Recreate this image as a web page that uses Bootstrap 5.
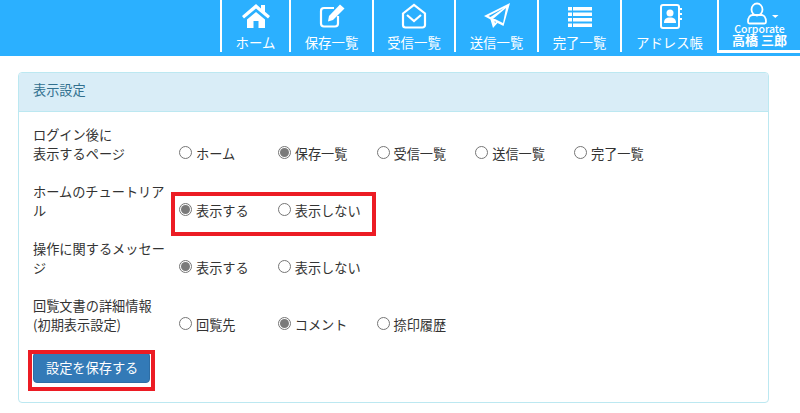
<!DOCTYPE html>
<html lang="ja"><head><meta charset="utf-8"><title>表示設定</title>
<link href="https://cdn.jsdelivr.net/npm/bootstrap@5.3.0/dist/css/bootstrap.min.css" rel="stylesheet">
<style>
html,body{height:413px;overflow:hidden;background:#fff}
body{font-family:"Noto Sans CJK JP","Liberation Sans",sans-serif;font-size:13.2px;color:#333;line-height:19px}
.topbar{height:56px;background:#2bb0ff}
.nav-cell{height:52px;border-left:2px solid #fff;color:#fff;font-size:13.4px;line-height:16px;text-align:center;white-space:nowrap;padding-top:3px}
.nav-cell svg{display:block;margin:0 auto 5px;height:26px;width:30px}
.c1{width:69px}.c2{width:83px}.c3{width:82px}.c4{width:83px}.c5{width:83px}.c6{width:97px}
.user-cell{width:83px;height:53px;border-left:2px solid #fff;border-bottom:3px solid #fff;color:#fff;text-align:center;font-weight:500;padding-top:2px}
.user-cell svg{height:24px;width:42px;display:block;margin:0 auto -2px}
.u-corp{font-size:10.5px;line-height:9px;white-space:nowrap}
.u-name{font-size:13px;line-height:12px;white-space:nowrap;font-weight:700;margin-top:1px}
.panel-box{margin:16px 31px 0 18px;height:331px;border:1px solid #bce8f1;border-radius:4px;position:relative}
.panel-head{height:39px;background:#d9edf7;border-bottom:1px solid #bce8f1;color:#31708f;padding:7px 14px;border-radius:3px 3px 0 0}
.panel-inner{padding:13px 14px 0}
.set-row{display:flex;align-items:flex-end;height:38px;margin-bottom:19px}
.set-row:nth-last-child(2){margin-bottom:18px}
.set-label{width:146px;flex:none}
.opt{width:98.75px;flex:none;display:flex;align-items:center;gap:4px;height:19px}
.opt-dot{width:13px;height:13px;border:1px solid #767676;border-radius:50%;background:#fff;flex:none;display:flex;align-items:center;justify-content:center;margin-top:-2px}
.opt-dot.on::after{content:"";width:9px;height:9px;border-radius:50%;background:#7a7a7a}
.save-btn{--bs-btn-bg:#337ab7;--bs-btn-border-color:#2e6da4;--bs-btn-hover-bg:#337ab7;--bs-btn-color:#fff;--bs-btn-hover-color:#fff;--bs-btn-font-size:13.2px;--bs-btn-padding-y:5px;--bs-btn-padding-x:12px;--bs-btn-border-radius:4px;--bs-btn-line-height:19px;width:117px;white-space:nowrap;box-shadow:0 0 0 1px #fff}
.mark-a,.mark-b{position:absolute;border:4px solid #ec1c24;pointer-events:none}
.mark-a{left:152px;top:119px;width:205px;height:44px}
.mark-b{left:9px;top:277px;width:127px;height:41px}
</style></head>
<body>
<div class="topbar d-flex justify-content-end">
  <div class="nav-cell c1">
    <svg viewBox="0 0 30 26"><path fill="#fff" d="M15 1 1 13l2 2.500L15 5.500l12 10 2-2.500-5-4.300V2h-4v3.400zM6 16.500V25h6.500v-7h5v7H24v-8.500L15 9z"/></svg>ホーム</div>
  <div class="nav-cell c2">
    <svg viewBox="0 0 30 26" fill="none" stroke="#fff" stroke-width="2.200"><path d="M21 13v7.500a3 3 0 0 1-3 3H7a3 3 0 0 1-3-3V8a3 3 0 0 1 3-3h10"/><path fill="#fff" stroke="none" d="M23 1.500 27.500 5.500 16 17l-5 1.500L12 13z"/></svg>保存一覧</div>
  <div class="nav-cell c3">
    <svg viewBox="0 0 30 26" fill="none" stroke="#fff" stroke-width="2.200"><path d="M4 10.500 15 2l11 8.500V22a2.500 2.500 0 0 1-2.500 2.500h-17A2.500 2.500 0 0 1 4 22z"/><path d="M8 12l7 6 7-6"/></svg>受信一覧</div>
  <div class="nav-cell c4">
    <svg viewBox="0 0 30 26"><path fill="#fff" fill-rule="evenodd" d="M28 0 2 13l6.500 3.500L11 25l4.500-5 6 3zM8.500 14 6.500 13 22 5zM11 16 24 5l-3 15-8-4zM12.500 18l1.500 1-1 1z"/></svg>送信一覧</div>
  <div class="nav-cell c5">
    <svg viewBox="0 0 30 26" fill="#fff"><path d="M3 4h24v3.500H3zM3 9.500h24V13H3zM3 15h24v3.500H3zM3 20.500h24V24H3z"/><path stroke="#2bb0ff" d="M7.500 3v22"/></svg>完了一覧</div>
  <div class="nav-cell c6">
    <svg viewBox="0 0 30 26" fill="none"><rect x="6" y="2" width="18" height="23" rx="2" stroke="#fff" stroke-width="2"/><circle cx="15" cy="10" r="3.500" fill="#fff"/><path fill="#fff" d="M9 20c0-4 2-5.500 6-5.500s6 1.500 6 5.500z"/><path stroke="#fff" stroke-width="2" d="M24 6h3M24 11h3M24 16h3"/></svg>アドレス帳</div>
  <div class="user-cell">
    <svg viewBox="0 0 42 24" fill="none"><ellipse cx="18" cy="7.500" rx="5.500" ry="6" stroke="#fff" stroke-width="1.800"/><path d="M9 20c0-5 2.500-7 4.500-7h9c2 0 4.500 2 4.500 7 0 1-.5 1.500-1.500 1.500h-15C9.500 21.500 9 21 9 20z" stroke="#fff" stroke-width="1.800"/><path fill="#fff" d="M33 13h6.500l-3.250 3z"/></svg>
    <div class="u-corp">Corporate</div><div class="u-name">高橋 三郎</div>
  </div>
</div>
<div class="panel-box">
  <div class="panel-head">表示設定</div>
  <div class="panel-inner">
    <div class="set-row"><div class="set-label">ログイン後に<br>表示するページ</div>
      <div class="opt"><span class="opt-dot"></span>ホーム</div><div class="opt"><span class="opt-dot on"></span>保存一覧</div><div class="opt"><span class="opt-dot"></span>受信一覧</div><div class="opt"><span class="opt-dot"></span>送信一覧</div><div class="opt"><span class="opt-dot"></span>完了一覧</div></div>
    <div class="set-row"><div class="set-label">ホームのチュートリア<br>ル</div>
      <div class="opt"><span class="opt-dot on"></span>表示する</div><div class="opt"><span class="opt-dot"></span>表示しない</div></div>
    <div class="set-row"><div class="set-label">操作に関するメッセー<br>ジ</div>
      <div class="opt"><span class="opt-dot on"></span>表示する</div><div class="opt"><span class="opt-dot"></span>表示しない</div></div>
    <div class="set-row"><div class="set-label">回覧文書の詳細情報<br>(初期表示設定)</div>
      <div class="opt"><span class="opt-dot"></span>回覧先</div><div class="opt"><span class="opt-dot on"></span>コメント</div><div class="opt"><span class="opt-dot"></span>捺印履歴</div></div>
    <button type="button" class="btn save-btn">設定を保存する</button>
  </div>
  <div class="mark-a"></div><div class="mark-b"></div>
</div>
<script src="https://cdn.jsdelivr.net/npm/bootstrap@5.3.0/dist/js/bootstrap.bundle.min.js"></script>
</body></html>
